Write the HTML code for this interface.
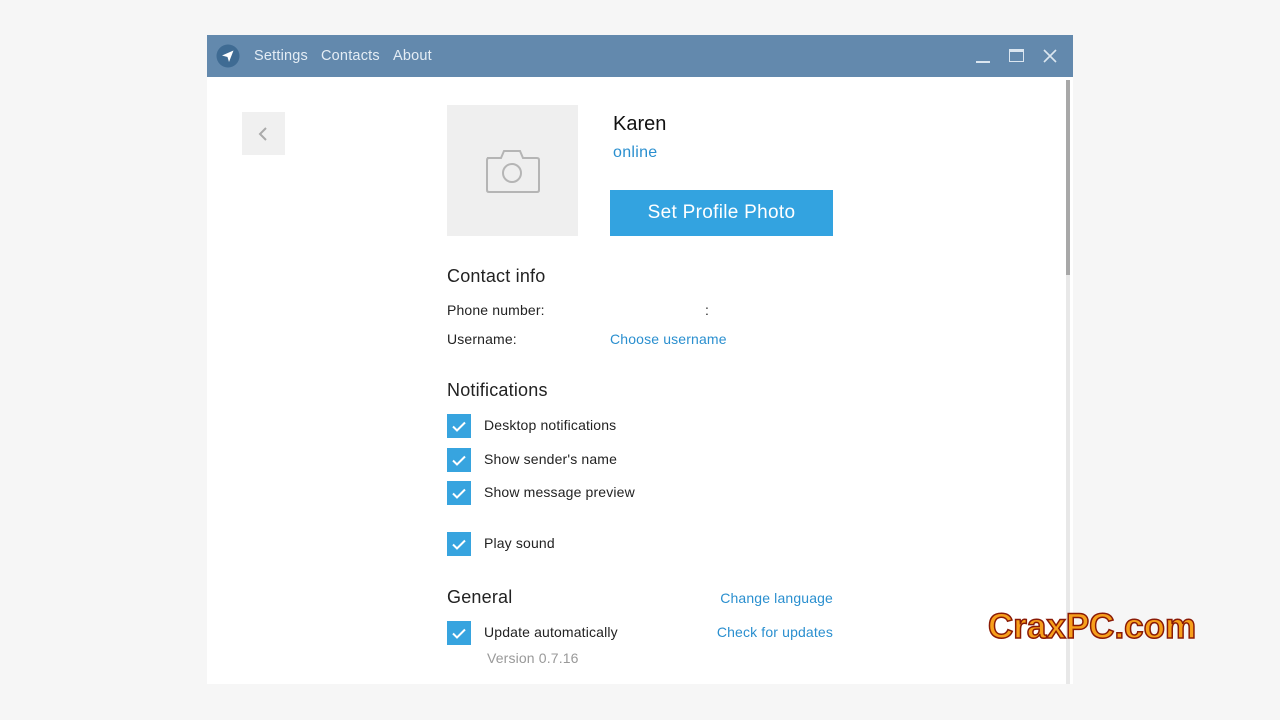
<!DOCTYPE html>
<html><head><meta charset="utf-8"><style>
*{margin:0;padding:0;box-sizing:border-box}
body{width:1280px;height:720px;background:#f6f6f6;font-family:"Liberation Sans","DejaVu Sans",sans-serif;position:relative;overflow:hidden;color:#222}
.a{position:absolute;white-space:nowrap}
.win{position:absolute;left:207px;top:35px;width:866px;height:649px;background:#fff}
.tb{position:absolute;left:207px;top:35px;width:866px;height:42px;background:#6389ad}
.menu{color:#e4edf5;font-size:14.5px;top:48px;letter-spacing:0.2px}
.s14{font-size:14px;letter-spacing:0.15px}
.h{font-size:18px;color:#222;letter-spacing:0.2px}
.link{color:#2a8fcf}
.cb{position:absolute;width:24px;height:24px;background:#37a4df;left:447px}
</style></head><body>
<div class="win"></div>
<div class="tb"></div>
<svg class="a" style="left:216px;top:44px" width="24" height="24" viewBox="0 0 24 24"><circle cx="12" cy="12" r="11.5" fill="#3f6b93"/><path d="M6 11.5 L17.5 6.5 L13 18 L11.5 13 Z" fill="#fff"/></svg>
<div class="a menu" style="left:254px">Settings</div>
<div class="a menu" style="left:321px">Contacts</div>
<div class="a menu" style="left:393px">About</div>
<div class="a" style="left:976px;top:61px;width:14px;height:2px;background:#dbe6f0"></div>
<div class="a" style="left:1009px;top:49px;width:15px;height:13px;border:1.5px solid #dbe6f0;border-top-width:3px"></div>
<svg class="a" style="left:1043px;top:49px" width="14" height="14"><path d="M1 1L13 13M13 1L1 13" stroke="#dbe6f0" stroke-width="1.6"/></svg>
<div class="a" style="left:1066px;top:80px;width:4px;height:604px;background:#e8e8e8"></div>
<div class="a" style="left:1066px;top:80px;width:4px;height:195px;background:#a8a8a8"></div>
<div class="a" style="left:242px;top:112px;width:43px;height:43px;background:#f0f0f0"></div>
<svg class="a" style="left:256px;top:126px" width="14" height="16"><path d="M10 2L4 8L10 14" stroke="#aaa" stroke-width="2" fill="none"/></svg>
<div class="a" style="left:447px;top:105px;width:131px;height:131px;background:#efefef"></div>
<svg class="a" style="left:484px;top:148px" width="58" height="46" viewBox="0 0 58 46"><path d="M3 10 H17 L20 3 H36 L39 10 H53 Q55 10 55 12 V42 Q55 44 53 44 H5 Q3 44 3 42 V12 Q3 10 5 10 Z" fill="none" stroke="#b5b5b5" stroke-width="2"/><circle cx="28" cy="25" r="9" fill="none" stroke="#b5b5b5" stroke-width="2"/></svg>
<div class="a" style="left:613px;top:113px;font-size:20px;color:#111">Karen</div>
<div class="a link" style="left:613px;top:144px;font-size:16px;letter-spacing:0.3px">online</div>
<div class="a" style="left:610px;top:190px;width:223px;height:46px;background:#33a3e0;color:#fff;font-size:19px;text-align:center;line-height:46px;letter-spacing:0.3px">Set Profile Photo</div>
<div class="a h" style="left:447px;top:266px">Contact info</div>
<div class="a s14" style="left:447px;top:302px">Phone number:</div>
<div class="a s14" style="left:705px;top:302px">:</div>
<div class="a s14" style="left:447px;top:331px">Username:</div>
<div class="a s14 link" style="left:610px;top:331px">Choose username</div>
<div class="a h" style="left:447px;top:380px">Notifications</div>
<div class="cb" style="top:414px"></div><div class="a s14" style="left:484px;top:417px">Desktop notifications</div>
<div class="cb" style="top:448px"></div><div class="a s14" style="left:484px;top:451px">Show sender's name</div>
<div class="cb" style="top:481px"></div><div class="a s14" style="left:484px;top:484px">Show message preview</div>
<div class="cb" style="top:532px"></div><div class="a s14" style="left:484px;top:535px">Play sound</div>
<div class="a h" style="left:447px;top:587px">General</div>
<div class="a s14 link" style="right:447px;top:590px">Change language</div>
<div class="cb" style="top:621px"></div><div class="a s14" style="left:484px;top:624px">Update automatically</div>
<div class="a s14 link" style="right:447px;top:624px">Check for updates</div>
<div class="a s14" style="left:487px;top:650px;color:#999">Version 0.7.16</div>
<svg class="a" style="left:447px;top:414px" width="24" height="240"><g stroke="#fff" stroke-width="2" fill="none"><path d="M6 12.5L10 16.5L18 8.5"/><path d="M6 46.5L10 50.5L18 42.5"/><path d="M6 79.5L10 83.5L18 75.5"/><path d="M6 130.5L10 134.5L18 126.5"/><path d="M6 219.5L10 223.5L18 215.5"/></g></svg>
<div class="a" style="left:988px;top:607px;font-size:35px;font-weight:bold;color:#f7a01c;-webkit-text-stroke:1.5px #8a1a05;letter-spacing:0px;font-family:'Liberation Sans',sans-serif">CraxPC.com</div>
</body></html>
